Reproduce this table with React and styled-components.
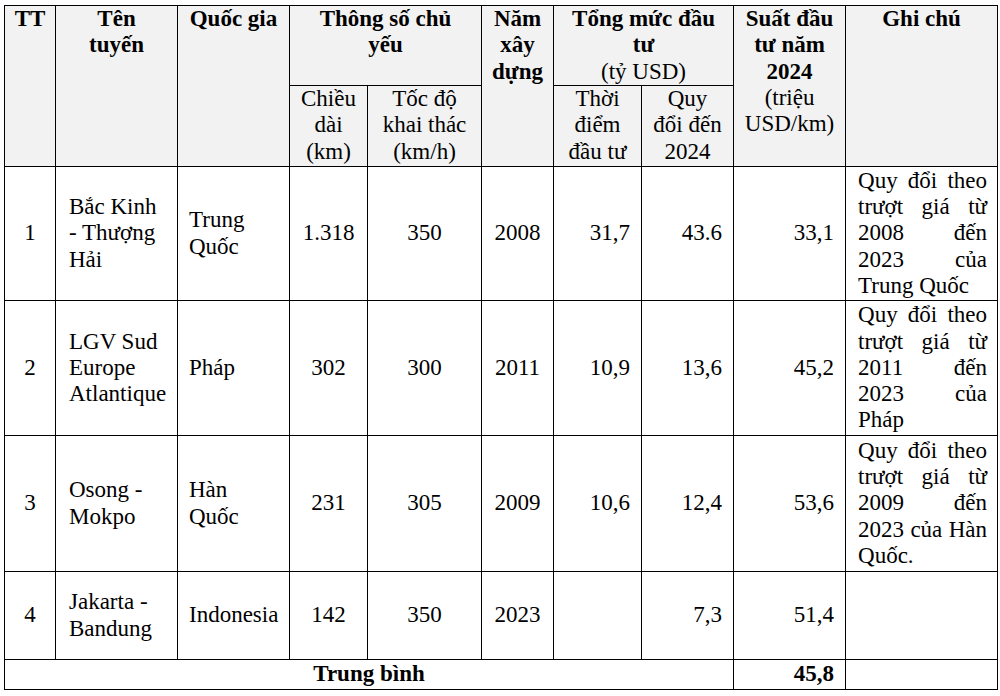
import React from 'react'
import styled, { createGlobalStyle } from 'styled-components'

const GlobalStyle = createGlobalStyle`
  html, body {
    margin: 0;
    padding: 0;
    background: #fff;
  }
`

// Table pieces...
const Page = styled.div`
  padding: 5px 0 0 4px;
  font-family: "Liberation Serif", "Times New Roman", serif;
  color: #000;
`

const Table = styled.table`
  border-collapse: collapse;
  table-layout: fixed;
  width: 993px;
  font-family: "Liberation Serif", "Times New Roman", serif;
  font-size: 23px;
  line-height: 26.3px;

  td, th {
    border: 1.5px solid #000;
    padding: 0;
  }
`

const Row = styled.tr`
  height: ${p => p.$h}px;
`

const Head = styled.th`
  background: #f2f2f2;
  font-weight: ${p => (p.$thin ? 'normal' : 'bold')};
  text-align: center;
  vertical-align: top;
`

const Thin = styled.span`
  font-weight: normal;
`

const pads = {
  name: '0 8px 0 13px',
  country: '0 8px 0 11px',
  right: '0 11px 0 4px',
  center: '0 4px',
}

const aligns = {
  name: 'left',
  country: 'left',
  right: 'right',
  center: 'center',
}

const Cell = styled.td`
  vertical-align: middle;
  text-align: ${p => aligns[p.$kind]};
  padding: ${p => pads[p.$kind]} !important;
  font-weight: ${p => (p.$bold ? 'bold' : 'normal')};
`

const NoteCell = styled.td`
  vertical-align: middle;
  padding: 0 10px 0 12px !important;
`

const NoteLine = styled.div`
  text-align: ${p => (p.$last ? 'left' : 'justify')};
  text-align-last: ${p => (p.$last ? 'left' : 'justify')};
`

const rows = [
  {
    tt: '1',
    name: ['Bắc Kinh', '- Thượng', 'Hải'],
    country: ['Trung', 'Quốc'],
    length: '1.318',
    speed: '350',
    year: '2008',
    cost: '31,7',
    cost24: '43.6',
    rate: '33,1',
    note: ['Quy đổi theo', 'trượt giá từ', '2008 đến', '2023 của', 'Trung Quốc'],
    h: 134,
  },
  {
    tt: '2',
    name: ['LGV Sud', 'Europe', 'Atlantique'],
    country: ['Pháp'],
    length: '302',
    speed: '300',
    year: '2011',
    cost: '10,9',
    cost24: '13,6',
    rate: '45,2',
    note: ['Quy đổi theo', 'trượt giá từ', '2011 đến', '2023 của', 'Pháp'],
    h: 135,
  },
  {
    tt: '3',
    name: ['Osong -', 'Mokpo'],
    country: ['Hàn', 'Quốc'],
    length: '231',
    speed: '305',
    year: '2009',
    cost: '10,6',
    cost24: '12,4',
    rate: '53,6',
    note: ['Quy đổi theo', 'trượt giá từ', '2009 đến', '2023 của Hàn', 'Quốc.'],
    h: 136,
  },
  {
    tt: '4',
    name: ['Jakarta -', 'Bandung'],
    country: ['Indonesia'],
    length: '142',
    speed: '350',
    year: '2023',
    cost: '',
    cost24: '7,3',
    rate: '51,4',
    note: [],
    h: 88,
  },
]

const lines = arr =>
  arr.map((t, i) => (
    <React.Fragment key={i}>
      {i > 0 && <br />}
      {t}
    </React.Fragment>
  ))

export default function App() {
  return (
    <Page>
      <GlobalStyle />
      <Table>
        <colgroup>
          <col style={{ width: 51 }} />
          <col style={{ width: 122 }} />
          <col style={{ width: 112 }} />
          <col style={{ width: 78 }} />
          <col style={{ width: 114 }} />
          <col style={{ width: 72 }} />
          <col style={{ width: 88 }} />
          <col style={{ width: 92 }} />
          <col style={{ width: 112 }} />
          <col style={{ width: 152 }} />
        </colgroup>
        <thead>
          <Row $h={80}>
            <Head rowSpan={2}>TT</Head>
            <Head rowSpan={2}>Tên<br />tuyến</Head>
            <Head rowSpan={2}>Quốc gia</Head>
            <Head colSpan={2}>Thông số chủ<br />yếu</Head>
            <Head rowSpan={2}>Năm<br />xây<br />dựng</Head>
            <Head colSpan={2}>
              Tổng mức đầu<br />tư<br /><Thin>(tỷ USD)</Thin>
            </Head>
            <Head rowSpan={2}>
              Suất đầu<br />tư năm<br />2024<br /><Thin>(triệu<br />USD/km)</Thin>
            </Head>
            <Head rowSpan={2}>Ghi chú</Head>
          </Row>
          <Row $h={81}>
            <Head $thin>Chiều<br />dài<br />(km)</Head>
            <Head $thin>Tốc độ<br />khai thác<br />(km/h)</Head>
            <Head $thin>Thời<br />điểm<br />đầu tư</Head>
            <Head $thin>Quy<br />đổi đến<br />2024</Head>
          </Row>
        </thead>
        <tbody>
          {rows.map(r => (
            <Row key={r.tt} $h={r.h}>
              <Cell $kind='center'>{r.tt}</Cell>
              <Cell $kind='name'>{lines(r.name)}</Cell>
              <Cell $kind='country'>{lines(r.country)}</Cell>
              <Cell $kind='center'>{r.length}</Cell>
              <Cell $kind='center'>{r.speed}</Cell>
              <Cell $kind='center'>{r.year}</Cell>
              <Cell $kind='right'>{r.cost}</Cell>
              <Cell $kind='right'>{r.cost24}</Cell>
              <Cell $kind='right'>{r.rate}</Cell>
              <NoteCell>
                {r.note.map((t, i) => (
                  <NoteLine key={i} $last={i === r.note.length - 1}>{t}</NoteLine>
                ))}
              </NoteCell>
            </Row>
          ))}
          <Row $h={30}>
            <Cell colSpan={8} $kind='center' $bold>Trung bình</Cell>
            <Cell $kind='right' $bold>45,8</Cell>
            <Cell $kind='center' />
          </Row>
        </tbody>
      </Table>
    </Page>
  )
}
